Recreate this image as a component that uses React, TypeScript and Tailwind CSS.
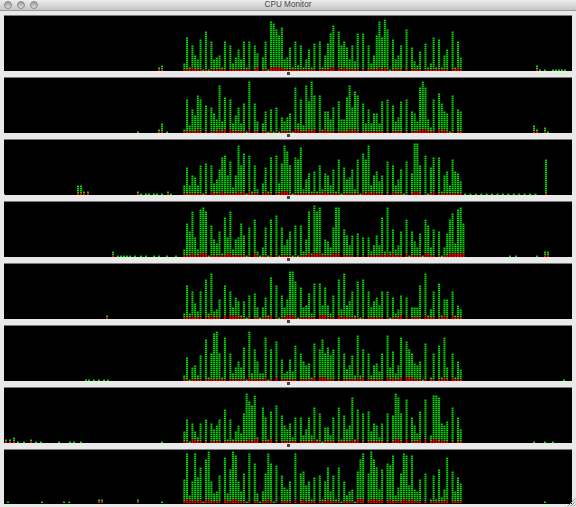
const X0 = 184.3;
const STEP = 2.71;

type Panel = { h: number[]; red: number[]; extra: [number, number][] };

const dots = (n: number, start: number): [number, number][] => {
  const out: [number, number][] = [];
  for (let i = 0; i < n; i++) out.push([start + i * 2.71 * 2, 1]);
  return out;
};

const panels: Panel[] = [
  {
    h: [4,17,2,13,8,6,16,1,20,1,15,6,7,8,2,15,0,13,4,7,11,6,15,2,15,0,13,9,0,7,15,1,25,24,21,18,22,6,7,12,2,15,3,13,2,6,11,2,14,0,15,2,8,14,19,23,0,20,13,15,12,6,13,5,19,0,19,0,13,4,8,18,25,17,26,21,1,16,6,8,13,0,21,0,12,5,3,10,0,14,2,4,17,2,16,2,8,11,0,20,2,15,7],
    red: [3,27,32,33,34,35,36,54,55,57,59,72,74,101],
    extra: [[159,2],[162,3],[537,3],[540,1],[545,1],[553,1],[556,1],[559,1],[562,1],[565,1]],
  },
  {
    h: [2,17,4,12,9,19,17,0,14,0,13,10,7,24,6,18,0,17,5,9,13,5,15,1,26,0,15,6,0,5,11,1,12,1,13,1,8,6,8,10,1,23,5,17,4,24,16,26,19,0,19,2,11,11,7,13,0,16,7,7,18,24,13,21,19,0,15,5,12,5,10,10,5,16,0,17,0,14,6,8,16,0,17,0,11,10,6,23,26,23,7,3,17,0,20,15,11,10,1,19,0,12,11],
    red: [5,13,15,17,24,41,42,46,48,52,61,63,87,88,89,94,96],
    extra: [[138,1],[159,2],[162,5],[167,1],[534,4],[537,2],[545,3],[548,1]],
  },
  {
    h: [5,14,5,10,9,5,15,1,16,0,15,6,8,13,19,20,10,17,4,10,25,15,21,1,20,2,15,3,0,6,14,2,19,0,20,6,16,25,22,15,1,19,18,24,3,8,11,2,12,2,15,3,11,10,5,13,2,18,1,14,8,9,13,3,18,1,21,18,25,5,10,12,7,10,0,17,0,15,5,8,13,1,17,0,11,26,26,15,0,20,1,14,19,0,19,2,10,12,5,18,12,11,7],
    red: [10,14,20,22,24,30,36,37,38,52,66,68,70,77,85,86,92],
    extra: [[4,1],[78,5],[81,5],[84,2],[88,2],[138,2],[141,1],[146,1],[149,1],[154,1],[157,1],[162,1],[168,2],[171,1],...dots(14,465),[546,18]],
  },
  {
    h: [4,17,13,23,10,4,24,25,23,1,16,9,7,13,2,20,10,23,4,9,10,17,11,1,15,0,19,3,1,5,15,1,19,0,21,1,15,6,9,13,1,16,1,16,3,9,23,2,26,23,25,2,9,8,5,15,25,25,0,14,11,6,11,0,12,0,10,0,10,3,6,11,6,20,3,25,3,14,4,6,13,0,19,1,13,8,5,12,1,19,16,5,14,0,13,1,5,12,19,22,7,24,25,17],
    red: [3,6,7,8,16,17,26,46,48,49,50,55,56,57,73,75,77,82,89,90,98,99,100,101,102,103],
    extra: [[113,3],[118,1],[121,1],[124,1],[127,1],[130,1],[135,1],[141,1],[146,1],[154,1],[159,1],[167,1],[176,1],[510,1],[516,1],[537,1],[545,3],[548,3]],
  },
  {
    h: [3,17,3,14,8,4,14,0,20,3,23,4,5,10,0,17,0,14,6,11,9,2,9,1,12,0,13,6,1,6,11,2,21,0,17,1,12,6,10,24,24,19,1,16,6,7,13,3,18,0,18,7,16,7,3,12,0,20,5,23,7,9,14,2,19,1,20,0,14,6,9,11,7,14,0,14,1,11,3,5,12,0,11,0,6,6,6,17,0,23,2,5,14,0,18,2,10,10,0,14,2,7,5],
    red: [3,10,15,17,18,19,32,38,39,40,50,51,52,57,59,80,89,96,99],
    extra: [[107,2]],
  },
  {
    h: [3,12,1,7,8,3,13,0,21,2,14,24,25,14,2,22,0,14,4,7,10,7,17,1,25,4,16,10,4,4,22,1,16,0,20,0,11,4,5,11,5,18,0,14,10,8,9,2,19,0,16,21,14,17,13,16,0,22,0,14,6,8,13,3,23,3,16,0,14,3,8,9,5,14,0,23,7,15,4,8,22,0,20,16,14,9,8,10,1,19,0,2,14,0,18,2,22,7,0,14,2,10,6],
    red: [24,30,34,48,50,51,52,64,66,75,77,80,82,83,84,96,99],
    extra: [[86,1],[89,1],[94,1],[99,1],[104,1],[108,1],[564,1]],
  },
  {
    h: [6,12,1,10,6,3,10,0,12,0,10,7,9,12,0,17,2,12,2,6,9,5,15,25,21,19,24,3,0,18,13,2,16,0,19,0,14,9,7,10,3,13,0,13,4,7,13,4,18,2,15,1,8,8,4,13,0,18,2,14,7,9,23,2,17,0,15,0,16,6,10,9,3,10,0,15,0,14,25,23,15,0,22,0,13,9,5,16,0,22,0,4,24,24,23,10,9,11,0,18,0,13,7],
    red: [3,4,24,26,27,32,48,62,64,78,79,82,87,89,92,93,95],
    extra: [[6,2],[10,2],[14,3],[18,1],[24,1],[31,2],[36,1],[41,1],[59,1],[70,1],[74,1],[81,1],[162,1],[534,1],[545,1],[553,1]],
  },
  {
    h: [12,25,4,11,25,13,18,1,22,26,11,5,6,14,0,23,5,17,26,24,11,6,15,1,25,0,20,5,1,6,15,25,20,1,19,0,14,8,7,11,0,25,0,15,16,9,11,2,13,0,14,2,11,18,6,14,2,18,1,11,4,6,7,1,16,22,25,0,15,26,22,18,7,17,0,20,19,24,4,8,15,25,24,9,24,7,6,12,0,15,0,2,14,2,17,3,7,23,0,16,6,13,10],
    red: [1,2,4,6,8,9,15,18,19,31,41,44,53,64,65,66,69,70,71,73,76,81,82,84,97],
    extra: [[8,1],[42,1],[64,1],[69,1],[99,2],[102,2],[138,2],[162,1],[545,1]],
  },
];

function barPaths(panel: Panel, offset: number, height: number) {
  let bright = "";
  let dark = "";
  let redBright = "";
  let redDark = "";
  // bright rows always fall on even rows of the graph
  const base = height % 2 === 1 ? height - 1 : height - 2;
  const add = (x: number, h: number, reds: number) => {
    for (let k = 0; k < h; k++) {
      const y = base - 2 * k;
      const isRed = k < reds;
      const b = `M${x.toFixed(2)} ${y}h2v1h-2z`;
      const d = `M${x.toFixed(2)} ${y - 1}h2v1h-2z`;
      if (isRed) {
        redBright += b;
        redDark += d;
      } else {
        bright += b;
        dark += d;
      }
    }
  };
  panel.h.forEach((h, i) => {
    const x = X0 + STEP * i - offset - 1;
    const reds = h < 2 ? 0 : panel.red.includes(i) ? 2 : 1;
    add(x, h, reds);
  });
  panel.extra.forEach(([ax, h]) => add(ax - offset - 1, h, h >= 2 ? 1 : 0));
  return { bright, dark, redBright, redDark };
}

function Graph({ panel, height }: { panel: Panel; height: number }) {
  const width = 568;
  const p = barPaths(panel, 4, height);
  return (
    <svg width={width} height={height} viewBox={`0 0 ${width} ${height}`} className="block bg-black">
      <path d={p.dark} fill="#006200" />
      <path d={p.bright} fill="#00e000" />
      <path d={p.redDark} fill="#b00000" />
      <path d={p.redBright} fill="#ff0000" />
    </svg>
  );
}

function Splitter() {
  return (
    <div className="h-[6px] flex items-start justify-center pt-[1px] bg-[#e9e9e9]">
      <div className="w-[3px] h-[3px] bg-[#444]" />
    </div>
  );
}

function Light() {
  return (
    <div className="w-[8px] h-[8px] rounded-full border border-[#8a8a8a] bg-gradient-to-b from-[#9a9a9a] to-[#e0e0e0]" />
  );
}

export default function App() {
  return (
    <div className="relative w-[576px] h-[507px] overflow-hidden bg-[#e9e9e9] flex flex-col font-['Liberation_Sans',sans-serif]">
      <div className="relative h-[11px] shrink-0 flex items-center gap-[5px] pl-[4px] border-b border-[#9a9a9a] bg-gradient-to-b from-[#ececec] to-[#c6c6c6]">
        <Light />
        <Light />
        <Light />
        <div className="absolute inset-0 flex items-center justify-center text-[8.2px] leading-none text-[#4a4a4a]">
          CPU Monitor
        </div>
      </div>
      <div className="h-[4px] shrink-0" />
      <div className="pl-[4px] pr-[4px] flex flex-col">
        {panels.map((panel, i) => (
          <div key={i}>
            <div className="border-t border-[#7a7a7a]">
              <Graph panel={panel} height={i === 7 ? 54 : 55} />
            </div>
            {i < 7 && <Splitter />}
          </div>
        ))}
      </div>
      <svg width="10" height="10" viewBox="0 0 10 10" className="absolute right-0 bottom-0">
        <path d="M9.5 1.5 1.5 9.5M9.5 4.5 4.5 9.5M9.5 7.5 7.5 9.5" stroke="#8c8c8c" strokeWidth="1" fill="none" />
      </svg>
    </div>
  );
}
